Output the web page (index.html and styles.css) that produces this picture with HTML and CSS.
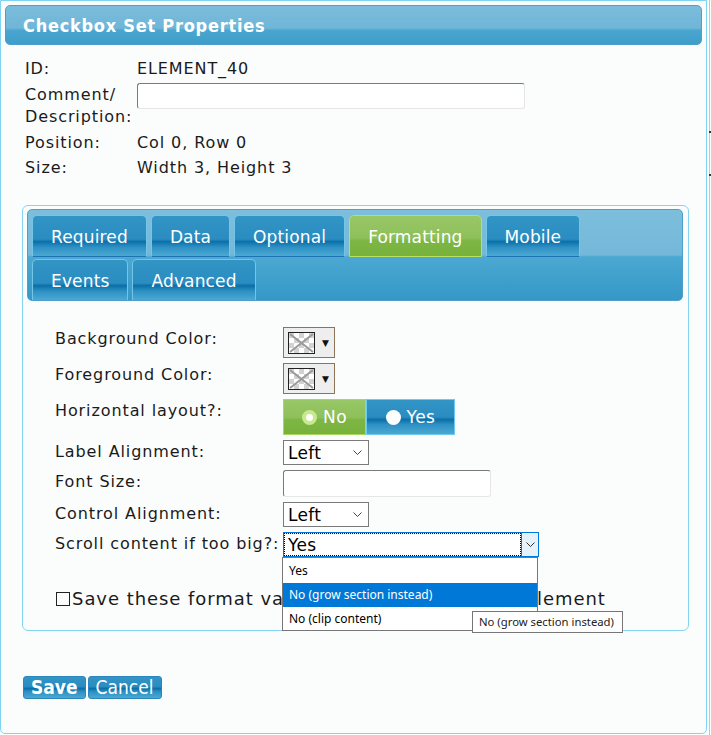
FILE: index.html
```html
<!DOCTYPE html>
<html lang="en">
<head>
    <meta charset="UTF-8">
    <meta name="viewport" content="width=device-width, initial-scale=1.0">
    <title>Checkbox Set Properties</title>
    <link rel="stylesheet" href="styles.css">
</head>
<body>
<div class="page">
    <div class="dialog">
        <div class="dialog-title">Checkbox Set Properties</div>

        <div class="info">
            <div class="info-label">ID:</div>
            <div class="info-value">ELEMENT_40</div>

            <div class="info-label comment-label">Comment/<br>Description:</div>
            <div class="info-value"><input type="text" class="text-input comment-input"></div>

            <div class="info-label">Position:</div>
            <div class="info-value">Col 0, Row 0</div>

            <div class="info-label">Size:</div>
            <div class="info-value">Width 3, Height 3</div>
        </div>

        <div class="tab-panel">
            <div class="tab-strip">
                <div class="tab-row">
                    <div class="tab">Required</div>
                    <div class="tab">Data</div>
                    <div class="tab">Optional</div>
                    <div class="tab active">Formatting</div>
                    <div class="tab">Mobile</div>
                </div>
                <div class="tab-row second">
                    <div class="tab">Events</div>
                    <div class="tab">Advanced</div>
                </div>
            </div>

            <div class="form-grid">
                <div class="form-label">Background Color:</div>
                <div class="form-control">
                    <div class="color-pick">
                        <svg class="swatch" width="27" height="22" viewBox="0 0 27 22">
                            <rect x="0" y="0" width="27" height="22" fill="#fff"/>
                            <g fill="#d2d2d2">
                                <rect x="1" y="1" width="5" height="5"/><rect x="11" y="1" width="5" height="5"/><rect x="21" y="1" width="5" height="5"/>
                                <rect x="6" y="6" width="5" height="5"/><rect x="16" y="6" width="5" height="5"/>
                                <rect x="1" y="11" width="5" height="5"/><rect x="11" y="11" width="5" height="5"/><rect x="21" y="11" width="5" height="5"/>
                                <rect x="6" y="16" width="5" height="5"/><rect x="16" y="16" width="5" height="5"/>
                            </g>
                            <path d="M2 2 L25 20 M25 2 L2 20" stroke="#9a9a9a" stroke-width="2"/>
                            <rect x="0.5" y="0.5" width="26" height="21" fill="none" stroke="#222"/>
                        </svg>
                        <span class="pick-arrow">&#9660;</span>
                    </div>
                </div>

                <div class="form-label">Foreground Color:</div>
                <div class="form-control">
                    <div class="color-pick">
                        <svg class="swatch" width="27" height="22" viewBox="0 0 27 22">
                            <rect x="0" y="0" width="27" height="22" fill="#fff"/>
                            <g fill="#d2d2d2">
                                <rect x="1" y="1" width="5" height="5"/><rect x="11" y="1" width="5" height="5"/><rect x="21" y="1" width="5" height="5"/>
                                <rect x="6" y="6" width="5" height="5"/><rect x="16" y="6" width="5" height="5"/>
                                <rect x="1" y="11" width="5" height="5"/><rect x="11" y="11" width="5" height="5"/><rect x="21" y="11" width="5" height="5"/>
                                <rect x="6" y="16" width="5" height="5"/><rect x="16" y="16" width="5" height="5"/>
                            </g>
                            <path d="M2 2 L25 20 M25 2 L2 20" stroke="#9a9a9a" stroke-width="2"/>
                            <rect x="0.5" y="0.5" width="26" height="21" fill="none" stroke="#222"/>
                        </svg>
                        <span class="pick-arrow">&#9660;</span>
                    </div>
                </div>

                <div class="form-label">Horizontal layout?:</div>
                <div class="form-control">
                    <div class="toggle">
                        <div class="toggle-opt on"><span class="radio-dot on"></span>No</div>
                        <div class="toggle-opt"><span class="radio-dot"></span>Yes</div>
                    </div>
                </div>

                <div class="form-label">Label Alignment:</div>
                <div class="form-control">
                    <div class="select small">
                        <span class="select-text">Left</span>
                        <svg class="chev" width="9" height="5" viewBox="0 0 9 5"><path d="M0.5 0.5 L4.5 4.5 L8.5 0.5" fill="none" stroke="#444"/></svg>
                    </div>
                </div>

                <div class="form-label">Font Size:</div>
                <div class="form-control"><input type="text" class="text-input size-input"></div>

                <div class="form-label">Control Alignment:</div>
                <div class="form-control">
                    <div class="select small">
                        <span class="select-text">Left</span>
                        <svg class="chev" width="9" height="5" viewBox="0 0 9 5"><path d="M0.5 0.5 L4.5 4.5 L8.5 0.5" fill="none" stroke="#444"/></svg>
                    </div>
                </div>

                <div class="form-label">Scroll content if too big?:</div>
                <div class="form-control">
                    <div class="select open">
                        <span class="select-text focused">Yes</span>
                        <span class="select-btn">
                            <svg width="9" height="5" viewBox="0 0 9 5"><path d="M0.5 0.5 L4.5 4.5 L8.5 0.5" fill="none" stroke="#333"/></svg>
                        </span>
                        <!-- native popup of the open select -->
                        <div class="select-popup">
                            <div class="popup-opt">Yes</div>
                            <div class="popup-opt hover">No (grow section instead)</div>
                            <div class="popup-opt">No (clip content)</div>
                        </div>
                        <div class="tooltip">No (grow section instead)</div>
                    </div>
                </div>
            </div>

            <div class="save-defaults"><span class="checkbox"></span>Save these format values as defaults for this element</div>
        </div>

        <div class="actions">
            <button class="btn save">Save</button>
            <button class="btn">Cancel</button>
        </div>
    </div>
    <div class="page-edge">
        <span class="tick first"></span>
        <span class="tick"></span>
    </div>
</div>
</body>
</html>
```

FILE: styles.css
```css
body{
    margin: 0;
    background: #fdfefe;
    font-family: "DejaVu Sans", Verdana, sans-serif;
    font-size: 16px;
    letter-spacing: 0.9px;
    color: #1a1a1a;
}

.page{
    display: flex;
    height: 735px;
}

.dialog{
    width: 707px;
    height: 734px;
    box-sizing: border-box;
    border: 1px solid #7fd4f2;
    border-radius: 0 0 5px 5px;
    background: #fbfdfd;
    flex: none;
}

.dialog-title{
    margin: 4px 4px 0;
    height: 40px;
    box-sizing: border-box;
    border: 1px solid #4b9fcd;
    border-radius: 5px;
    background: linear-gradient(to bottom, #7bbcdb 0%, #70b6d8 58%, #4aa6cf 64%, #3d9ec9 100%);
    color: #fff;
    font-family: "DejaVu Sans Condensed", "DejaVu Sans", sans-serif;
    font-weight: bold;
    font-size: 18px;
    letter-spacing: 0.75px;
    line-height: 39px;
    padding-left: 17px;
}

/* element info */
.info{
    display: grid;
    grid-template-columns: 112px auto;
    margin: 11px 0 0 24px;
    line-height: 25px;
}

.comment-label{
    line-height: 22px;
    padding: 3px 0 2px;
}

.text-input{
    display: block;
    box-sizing: border-box;
    border: 1px solid;
    border-color: #7a7a7a #e6e6e6 #e6e6e6 #7a7a7a;
    border-radius: 3px;
    background: #fff;
    padding: 0;
    margin: 0;
}

.comment-input{
    width: 388px;
    height: 26px;
    margin-top: 2px;
}

/* tab panel */
.tab-panel{
    margin: 25px 0 0 21px;
    width: 667px;
    box-sizing: border-box;
    border: 1px solid #85d5f2;
    border-radius: 6px;
    padding: 3px 5px 19px 4px;
}

.tab-strip{
    height: 92px;
    box-sizing: border-box;
    border: 1px solid #4f9fcc;
    border-radius: 5px;
    padding: 5px 0 0 4px;
    background: linear-gradient(to bottom, #7dbedc 0%, #74b8d9 50%, #4ba8d1 52%, #3598c7 100%);
}

.tab-row{
    display: flex;
    gap: 4px;
    height: 42px;
}

.tab-row.second{
    margin-top: 2px;
    height: 41px;
}

.tab{
    box-sizing: border-box;
    padding: 0 18px;
    border: 1px solid #74c6e8;
    border-bottom: 1px solid #1d73b4;
    border-radius: 5px 5px 0 0;
    background: linear-gradient(to bottom, #3295c5 0%, #2a8cc0 58%, #0b6fa9 64%, #2e91c4 78%, #4ba8d2 100%);
    color: #fff;
    font-size: 17px;
    letter-spacing: 0.15px;
    line-height: 43px;
}

.tab-row.second .tab{
    border-bottom: none;
    line-height: 42px;
}

.tab.active{
    border-color: #b9e15c;
    background: linear-gradient(to bottom, #98c767 0%, #8ec05a 55%, #7db644 62%, #78b23c 100%);
}

/* formatting form */
.form-grid{
    display: grid;
    grid-template-columns: 228px auto;
    row-gap: 5px;
    margin-top: 26px;
    padding-left: 28px;
}

.form-label{
    line-height: 24px;
}

.form-control{
    display: flex;
    align-items: flex-start;
}

.color-pick{
    width: 52px;
    height: 31px;
    box-sizing: border-box;
    border: 1px solid #8c7458;
    background: #eeeeee;
    display: flex;
    align-items: center;
    padding-left: 4px;
}

.swatch{
    display: block;
}

.pick-arrow{
    font-size: 9px;
    margin-left: 7px;
    color: #111;
}

.toggle{
    display: flex;
    height: 36px;
}

.toggle-opt{
    box-sizing: border-box;
    display: flex;
    align-items: center;
    justify-content: center;
    gap: 6px;
    color: #fff;
    font-size: 17px;
    letter-spacing: 0.5px;
    border: 1px solid #6ccaf0;
    background: linear-gradient(to bottom, #3295c5 0%, #2a8cc0 50%, #0b6fa9 58%, #2e91c4 72%, #4ba8d2 100%);
    width: 89px;
}

.toggle-opt.on{
    width: 83px;
    border-color: #a9d85a;
    background: linear-gradient(to bottom, #98c767 0%, #8ec05a 52%, #7db644 58%, #78b23c 100%);
}

.radio-dot{
    width: 15px;
    height: 15px;
    border-radius: 50%;
    background: #fff;
    box-sizing: border-box;
}

.radio-dot.on{
    background: #fff;
    border: 4px solid #c6ea8d;
}

.select{
    position: relative;
    display: flex;
    align-items: center;
    box-sizing: border-box;
    width: 256px;
    height: 25px;
    border: 1px solid #7a7a7a;
    background: #fff;
    color: #000;
    font-size: 17px;
    letter-spacing: 0.3px;
}

.select.small{
    width: 86px;
    padding-left: 4px;
}

.select.small .select-text{
    flex: 1;
}

.chev{
    margin-right: 6px;
}

.select.open{
    border-color: #0078d7;
}

.select-text.focused{
    flex: 1;
    align-self: stretch;
    margin: 1px;
    padding-left: 3px;
    outline: 1px dotted #000;
    line-height: 22px;
}

.select-btn{
    width: 16px;
    align-self: stretch;
    background: #e5f1fb;
    border-left: 1px solid #0078d7;
    display: flex;
    align-items: center;
    justify-content: center;
}

.select-popup{
    position: absolute;
    left: -2px;
    top: 24px;
    width: 256px;
    height: 74px;
    box-sizing: border-box;
    border: 1px solid #767676;
    background: #fff;
    padding-top: 1px;
    font-family: "Noto Sans", "DejaVu Sans", sans-serif;
    font-size: 12px;
    letter-spacing: 0;
    z-index: 2;
}

.popup-opt{
    height: 24px;
    line-height: 24px;
    padding-left: 6px;
    color: #000;
}

.popup-opt.hover{
    background: #0078d7;
    color: #fff;
}

.tooltip{
    position: absolute;
    left: 188px;
    top: 78px;
    width: 151px;
    height: 22px;
    box-sizing: border-box;
    border: 1px solid #767676;
    background: #fff;
    color: #222;
    font-family: "Noto Sans", "DejaVu Sans", sans-serif;
    font-size: 11.3px;
    letter-spacing: 0;
    white-space: nowrap;
    line-height: 20px;
    padding-left: 6px;
    z-index: 3;
}

.size-input{
    width: 208px;
    height: 27px;
}

.save-defaults{
    margin: 30px 0 0 28px;
    font-size: 18px;
    letter-spacing: 0.95px;
    line-height: 24px;
    display: flex;
    align-items: center;
}

.checkbox{
    width: 12px;
    height: 12px;
    border: 1px solid #222;
    margin: 0 2px 0 1px;
}

/* buttons */
.actions{
    margin: 45px 0 0 22px;
    display: flex;
    gap: 2px;
}

.btn{
    height: 23px;
    box-sizing: border-box;
    border: 1px solid #2a86bb;
    border-radius: 3px;
    padding: 0 7px;
    background: linear-gradient(to bottom, #3295c5 0%, #2a8cc0 45%, #0b6fa9 55%, #2e91c4 70%, #4ba8d2 100%);
    color: #fff;
    font-family: "DejaVu Sans Condensed", "DejaVu Sans", sans-serif;
    font-size: 19px;
    letter-spacing: 0;
    line-height: 21px;
}

.btn.save{
    font-weight: bold;
    padding: 0 7px;
}

.page-edge{
    margin-left: 2px;
    width: 2px;
    border-left: 1px solid #8fd8f3;
    display: flex;
    flex-direction: column;
}

.tick{
    width: 2px;
    height: 2px;
    background: #333;
    margin: 41px 0 0 -1px;
}

.tick.first{
    margin-top: 131px;
}
```
